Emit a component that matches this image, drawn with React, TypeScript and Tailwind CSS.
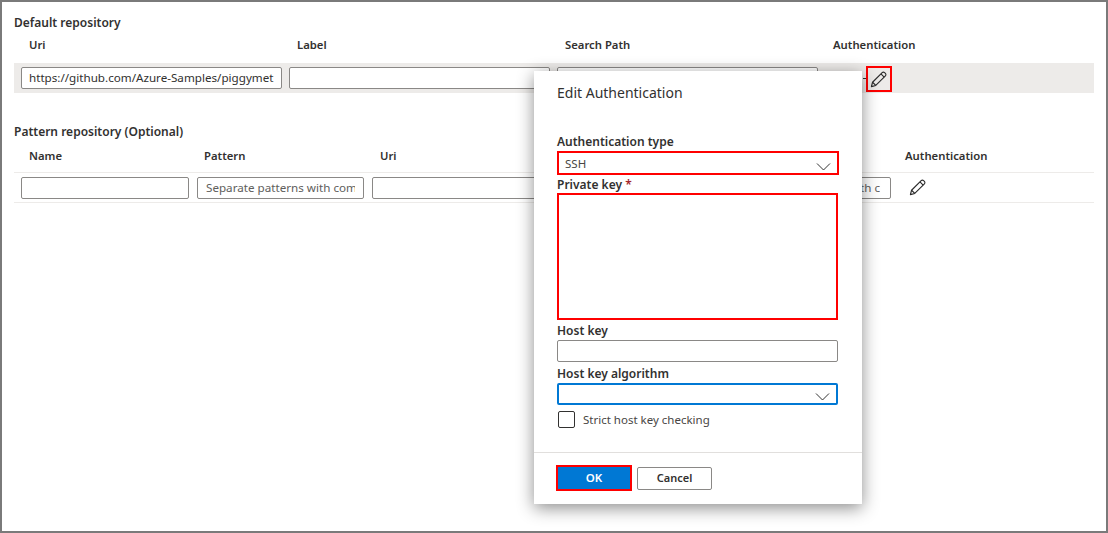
function PencilIcon({ className }: { className?: string }) {
  return (
    <svg className={className} viewBox="0 0 18 18" fill="none" stroke="#2b2b2b" strokeWidth="1.2">
      <path d="M1.5 16.5l1.2-4.6L12.9 1.7c.7-.7 1.8-.7 2.5 0l.9.9c.7.7.7 1.8 0 2.5L6.1 15.3z" strokeLinejoin="round" />
      <path d="M2.7 11.9l3.4 3.4M11.6 3l3.4 3.4" />
    </svg>
  );
}

function Chevron() {
  return (
    <svg className="absolute right-[6px] bottom-[2px] w-[15px] h-[9px]" viewBox="0 0 15 9" fill="none" stroke="#333" strokeWidth="1">
      <path d="M1 1.5l6.5 6.5L14 1.5" />
    </svg>
  );
}

function TextBox({ value, placeholder, className, inner }: { value?: string; placeholder?: string; className?: string; inner?: string }) {
  return (
    <div className={"h-[22px] border border-[#8a8886] rounded-[2px] bg-white text-[11.65px] leading-[20px] " + (className || "")}>
      <div className={"overflow-hidden whitespace-nowrap " + (inner || "")}>
        {value}
        {placeholder && <span className="text-[#605e5c]">{placeholder}</span>}
      </div>
    </div>
  );
}

function ColHead({ children }: { children: string }) {
  return <div className="text-[11.3px] font-semibold leading-[16px] text-[#323130] pl-2">{children}</div>;
}

function FieldLabel({ children, className }: { children: React.ReactNode; className?: string }) {
  return <div className={"text-[12px] font-semibold leading-[16px] text-[#323130] " + (className || "")}>{children}</div>;
}

function AuthDialog() {
  return (
    <div className="absolute left-[532px] top-[69px] w-[328px] h-[433px] bg-white shadow-[0_4px_16px_rgba(0,0,0,0.45)] flex flex-col text-[#323130]">
      <div className="pl-[23px] pr-6 pt-[12px] text-[14px] leading-[20px]">Edit Authentication</div>
      <div className="pl-[23px] pr-6 mt-[31px] flex flex-col">
        <FieldLabel>Authentication type</FieldLabel>
        <div className="relative mt-[1px] h-[24px] w-[282px] border-[2px] border-[#ff0000] px-[6px] text-[11.5px] leading-[22px] text-[#484644]">
          SSH
          <Chevron />
        </div>
        <FieldLabel className="mt-[2px]">
          Private key <span className="text-[#a4262c]">*</span>
        </FieldLabel>
        <div className="h-[127px] w-[281px] border-[2px] border-[#ff0000]" />
        <FieldLabel className="mt-[3px]">Host key</FieldLabel>
        <div className="mt-[1px] h-[22px] w-[281px] border border-[#8a8886] rounded-[2px]" />
        <FieldLabel className="mt-[4px]">Host key algorithm</FieldLabel>
        <div className="relative mt-[1px] h-[22px] w-[281px] border-[2px] border-[#0078d4] rounded-[2px]">
          <Chevron />
        </div>
        <div className="mt-[6px] flex items-center gap-2 pl-[1px]">
          <div className="w-[17px] h-[17px] border border-[#323130] rounded-[2px]" />
          <span className="text-[11.5px] leading-[16px] text-[#484644]">Strict host key checking</span>
        </div>
      </div>
      <div className="mt-[24px] border-t border-[#e1dfdd] pl-[22px] pt-[12px] flex items-center gap-[5px]">
        <button className="w-[76px] h-[26px] bg-[#0078d4] border-[2px] border-[#ff0000] text-white text-[11.5px] font-semibold">OK</button>
        <button className="w-[75px] h-[23px] bg-white border border-[#8a8886] rounded-[2px] text-[11px] font-semibold leading-[20px] text-[#323130]">Cancel</button>
      </div>
    </div>
  );
}

export default function App() {
  return (
    <div className="relative w-[1108px] h-[533px] border-2 border-[#7a7a7a] bg-white overflow-hidden text-[#323130] font-['Noto_Sans','Open_Sans',sans-serif]">
      <div className="px-[12px] pt-[13px]">
        <div className="text-[12px] font-semibold leading-[16px]">Default repository</div>

        <div className="grid grid-cols-[268px_268px_268px_1fr] pl-[7px] mt-[6px] h-[16px]">
          <ColHead>Uri</ColHead>
          <ColHead>Label</ColHead>
          <ColHead>Search Path</ColHead>
          <ColHead>Authentication</ColHead>
        </div>

        <div className="mt-[10px] h-[30px] bg-[#edebe9] flex items-center pl-[7px] pr-2">
          <TextBox className="w-[261px]" inner="px-[7px]" value="https://github.com/Azure-Samples/piggymet" />
          <TextBox className="w-[261px] ml-[7px]" />
          <TextBox className="w-[261px] ml-[7px]" />
          <div className="ml-[45px] w-[3px] h-[1px] bg-[#323130]" />
          <div className="w-[26px] h-[26px] mt-[2px] pr-[2px] border-[2px] border-[#ff0000] flex items-center justify-center">
            <PencilIcon className="w-[17px] h-[17px]" />
          </div>
        </div>

        <div className="text-[12px] font-semibold leading-[16px] mt-[31px]">Pattern repository (Optional)</div>

        <div className="grid grid-cols-[175px_176px_175px_175px_175px_1fr] pl-[7px] mt-[8px] h-[16px]">
          <ColHead>Name</ColHead>
          <ColHead>Pattern</ColHead>
          <ColHead>Uri</ColHead>
          <div />
          <div />
          <ColHead>Authentication</ColHead>
        </div>

        <div className="mt-[8px] h-[31px] border-y border-[#edebe9] flex items-center pl-[7px]">
          <TextBox className="w-[168px]" />
          <TextBox className="w-[167px] ml-[8px]" inner="mx-[8px]" placeholder="Separate patterns with comma" />
          <TextBox className="w-[168px] ml-[8px]" />
          <TextBox className="w-[168px] ml-[7px]" />
          <TextBox className="w-[168px] ml-[8px]" inner="ml-[8px] mr-[10px] text-right" placeholder="Separate patterns with c" />
          <PencilIcon className="ml-[18px] w-[17px] h-[17px]" />
        </div>
      </div>

      <AuthDialog />
    </div>
  );
}
